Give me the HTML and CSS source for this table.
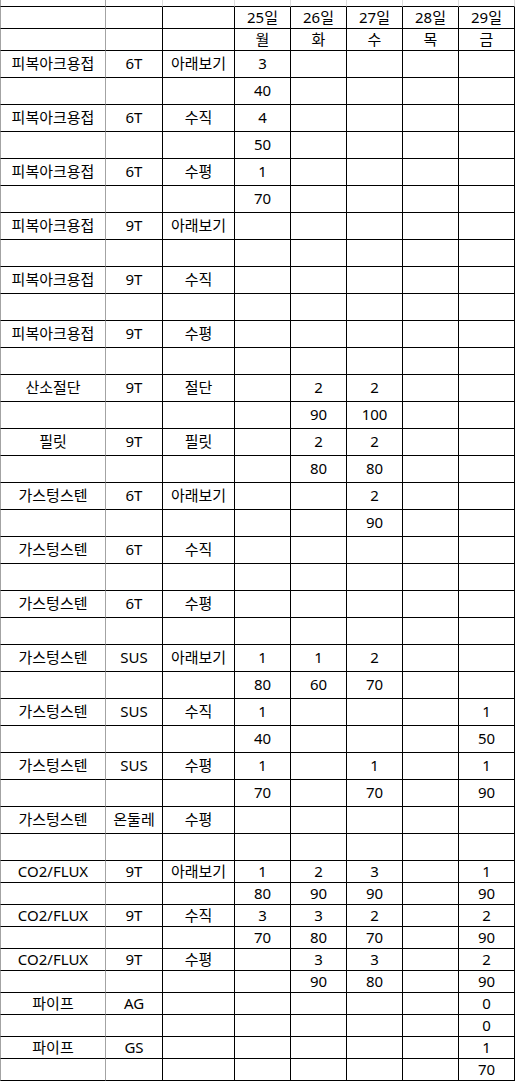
FILE: index.html
```html
<!DOCTYPE html>
<html lang="ko">
<head>
<meta charset="utf-8">
<title>용접 일정표</title>
<link rel="stylesheet" href="styles.css">
</head>
<body>
<div class="sheet">
  <div class="row top"><div class="c"></div><div class="c"></div><div class="c"></div><div class="c"></div><div class="c"></div><div class="c"></div><div class="c"></div><div class="c"></div></div>
  <div class="row s"><div class="c"></div><div class="c"></div><div class="c"></div><div class="c">25일</div><div class="c">26일</div><div class="c">27일</div><div class="c">28일</div><div class="c">29일</div></div>
  <div class="row s"><div class="c"></div><div class="c"></div><div class="c"></div><div class="c">월</div><div class="c">화</div><div class="c">수</div><div class="c">목</div><div class="c">금</div></div>

  <div class="row"><div class="c">피복아크용접</div><div class="c">6T</div><div class="c">아래보기</div><div class="c">3</div><div class="c"></div><div class="c"></div><div class="c"></div><div class="c"></div></div>
  <div class="row"><div class="c"></div><div class="c"></div><div class="c"></div><div class="c">40</div><div class="c"></div><div class="c"></div><div class="c"></div><div class="c"></div></div>
  <div class="row"><div class="c">피복아크용접</div><div class="c">6T</div><div class="c">수직</div><div class="c">4</div><div class="c"></div><div class="c"></div><div class="c"></div><div class="c"></div></div>
  <div class="row"><div class="c"></div><div class="c"></div><div class="c"></div><div class="c">50</div><div class="c"></div><div class="c"></div><div class="c"></div><div class="c"></div></div>
  <div class="row"><div class="c">피복아크용접</div><div class="c">6T</div><div class="c">수평</div><div class="c">1</div><div class="c"></div><div class="c"></div><div class="c"></div><div class="c"></div></div>
  <div class="row"><div class="c"></div><div class="c"></div><div class="c"></div><div class="c">70</div><div class="c"></div><div class="c"></div><div class="c"></div><div class="c"></div></div>
  <div class="row"><div class="c">피복아크용접</div><div class="c">9T</div><div class="c">아래보기</div><div class="c"></div><div class="c"></div><div class="c"></div><div class="c"></div><div class="c"></div></div>
  <div class="row"><div class="c"></div><div class="c"></div><div class="c"></div><div class="c"></div><div class="c"></div><div class="c"></div><div class="c"></div><div class="c"></div></div>
  <div class="row"><div class="c">피복아크용접</div><div class="c">9T</div><div class="c">수직</div><div class="c"></div><div class="c"></div><div class="c"></div><div class="c"></div><div class="c"></div></div>
  <div class="row"><div class="c"></div><div class="c"></div><div class="c"></div><div class="c"></div><div class="c"></div><div class="c"></div><div class="c"></div><div class="c"></div></div>
  <div class="row"><div class="c">피복아크용접</div><div class="c">9T</div><div class="c">수평</div><div class="c"></div><div class="c"></div><div class="c"></div><div class="c"></div><div class="c"></div></div>
  <div class="row"><div class="c"></div><div class="c"></div><div class="c"></div><div class="c"></div><div class="c"></div><div class="c"></div><div class="c"></div><div class="c"></div></div>
  <div class="row"><div class="c">산소절단</div><div class="c">9T</div><div class="c">절단</div><div class="c"></div><div class="c">2</div><div class="c">2</div><div class="c"></div><div class="c"></div></div>
  <div class="row"><div class="c"></div><div class="c"></div><div class="c"></div><div class="c"></div><div class="c">90</div><div class="c">100</div><div class="c"></div><div class="c"></div></div>
  <div class="row"><div class="c">필릿</div><div class="c">9T</div><div class="c">필릿</div><div class="c"></div><div class="c">2</div><div class="c">2</div><div class="c"></div><div class="c"></div></div>
  <div class="row"><div class="c"></div><div class="c"></div><div class="c"></div><div class="c"></div><div class="c">80</div><div class="c">80</div><div class="c"></div><div class="c"></div></div>
  <div class="row"><div class="c">가스텅스텐</div><div class="c">6T</div><div class="c">아래보기</div><div class="c"></div><div class="c"></div><div class="c">2</div><div class="c"></div><div class="c"></div></div>
  <div class="row"><div class="c"></div><div class="c"></div><div class="c"></div><div class="c"></div><div class="c"></div><div class="c">90</div><div class="c"></div><div class="c"></div></div>
  <div class="row"><div class="c">가스텅스텐</div><div class="c">6T</div><div class="c">수직</div><div class="c"></div><div class="c"></div><div class="c"></div><div class="c"></div><div class="c"></div></div>
  <div class="row"><div class="c"></div><div class="c"></div><div class="c"></div><div class="c"></div><div class="c"></div><div class="c"></div><div class="c"></div><div class="c"></div></div>
  <div class="row"><div class="c">가스텅스텐</div><div class="c">6T</div><div class="c">수평</div><div class="c"></div><div class="c"></div><div class="c"></div><div class="c"></div><div class="c"></div></div>
  <div class="row"><div class="c"></div><div class="c"></div><div class="c"></div><div class="c"></div><div class="c"></div><div class="c"></div><div class="c"></div><div class="c"></div></div>
  <div class="row"><div class="c">가스텅스텐</div><div class="c">SUS</div><div class="c">아래보기</div><div class="c">1</div><div class="c">1</div><div class="c">2</div><div class="c"></div><div class="c"></div></div>
  <div class="row"><div class="c"></div><div class="c"></div><div class="c"></div><div class="c">80</div><div class="c">60</div><div class="c">70</div><div class="c"></div><div class="c"></div></div>
  <div class="row"><div class="c">가스텅스텐</div><div class="c">SUS</div><div class="c">수직</div><div class="c">1</div><div class="c"></div><div class="c"></div><div class="c"></div><div class="c">1</div></div>
  <div class="row"><div class="c"></div><div class="c"></div><div class="c"></div><div class="c">40</div><div class="c"></div><div class="c"></div><div class="c"></div><div class="c">50</div></div>
  <div class="row"><div class="c">가스텅스텐</div><div class="c">SUS</div><div class="c">수평</div><div class="c">1</div><div class="c"></div><div class="c">1</div><div class="c"></div><div class="c">1</div></div>
  <div class="row"><div class="c"></div><div class="c"></div><div class="c"></div><div class="c">70</div><div class="c"></div><div class="c">70</div><div class="c"></div><div class="c">90</div></div>
  <div class="row"><div class="c">가스텅스텐</div><div class="c">온둘레</div><div class="c">수평</div><div class="c"></div><div class="c"></div><div class="c"></div><div class="c"></div><div class="c"></div></div>
  <div class="row"><div class="c"></div><div class="c"></div><div class="c"></div><div class="c"></div><div class="c"></div><div class="c"></div><div class="c"></div><div class="c"></div></div>

  <div class="row s"><div class="c">CO2/FLUX</div><div class="c">9T</div><div class="c">아래보기</div><div class="c">1</div><div class="c">2</div><div class="c">3</div><div class="c"></div><div class="c">1</div></div>
  <div class="row s"><div class="c"></div><div class="c"></div><div class="c"></div><div class="c">80</div><div class="c">90</div><div class="c">90</div><div class="c"></div><div class="c">90</div></div>
  <div class="row s"><div class="c">CO2/FLUX</div><div class="c">9T</div><div class="c">수직</div><div class="c">3</div><div class="c">3</div><div class="c">2</div><div class="c"></div><div class="c">2</div></div>
  <div class="row s"><div class="c"></div><div class="c"></div><div class="c"></div><div class="c">70</div><div class="c">80</div><div class="c">70</div><div class="c"></div><div class="c">90</div></div>
  <div class="row s"><div class="c">CO2/FLUX</div><div class="c">9T</div><div class="c">수평</div><div class="c"></div><div class="c">3</div><div class="c">3</div><div class="c"></div><div class="c">2</div></div>
  <div class="row s"><div class="c"></div><div class="c"></div><div class="c"></div><div class="c"></div><div class="c">90</div><div class="c">80</div><div class="c"></div><div class="c">90</div></div>
  <div class="row s"><div class="c">파이프</div><div class="c">AG</div><div class="c"></div><div class="c"></div><div class="c"></div><div class="c"></div><div class="c"></div><div class="c">0</div></div>
  <div class="row s"><div class="c"></div><div class="c"></div><div class="c"></div><div class="c"></div><div class="c"></div><div class="c"></div><div class="c"></div><div class="c">0</div></div>
  <div class="row s"><div class="c">파이프</div><div class="c">GS</div><div class="c"></div><div class="c"></div><div class="c"></div><div class="c"></div><div class="c"></div><div class="c">1</div></div>
  <div class="row s"><div class="c"></div><div class="c"></div><div class="c"></div><div class="c"></div><div class="c"></div><div class="c"></div><div class="c"></div><div class="c">70</div></div>
</div>
</body>
</html>
```

FILE: styles.css
```css
html, body {
  margin: 0;
  padding: 0;
  background: #ffffff;
}

.sheet {
  width: 515px;
  font-family: "Noto Sans", "Noto Sans CJK KR", sans-serif;
  font-size: 15px;
  line-height: 1;
  color: #000000;
}

.row {
  display: grid;
  grid-template-columns: 106px 57px 72px 56px 56px 56px 56px 56px;
  height: 27px;
}

.row.s {
  height: 22px;
}

.row.top {
  height: 7px;
}

.c {
  box-sizing: border-box;
  display: flex;
  align-items: center;
  justify-content: center;
  border-right: 1px solid #000000;
  border-bottom: 1px solid #000000;
  white-space: nowrap;
  overflow: hidden;
  padding-bottom: 1px;
}

.c:first-child {
  border-left: 1px solid #a3a3a3;
  border-right-color: #a3a3a3;
}

.row.top .c {
  border-right-color: #dcdcdc;
  padding: 0;
}

.row.top .c:first-child {
  border-right-color: #a3a3a3;
}
```
